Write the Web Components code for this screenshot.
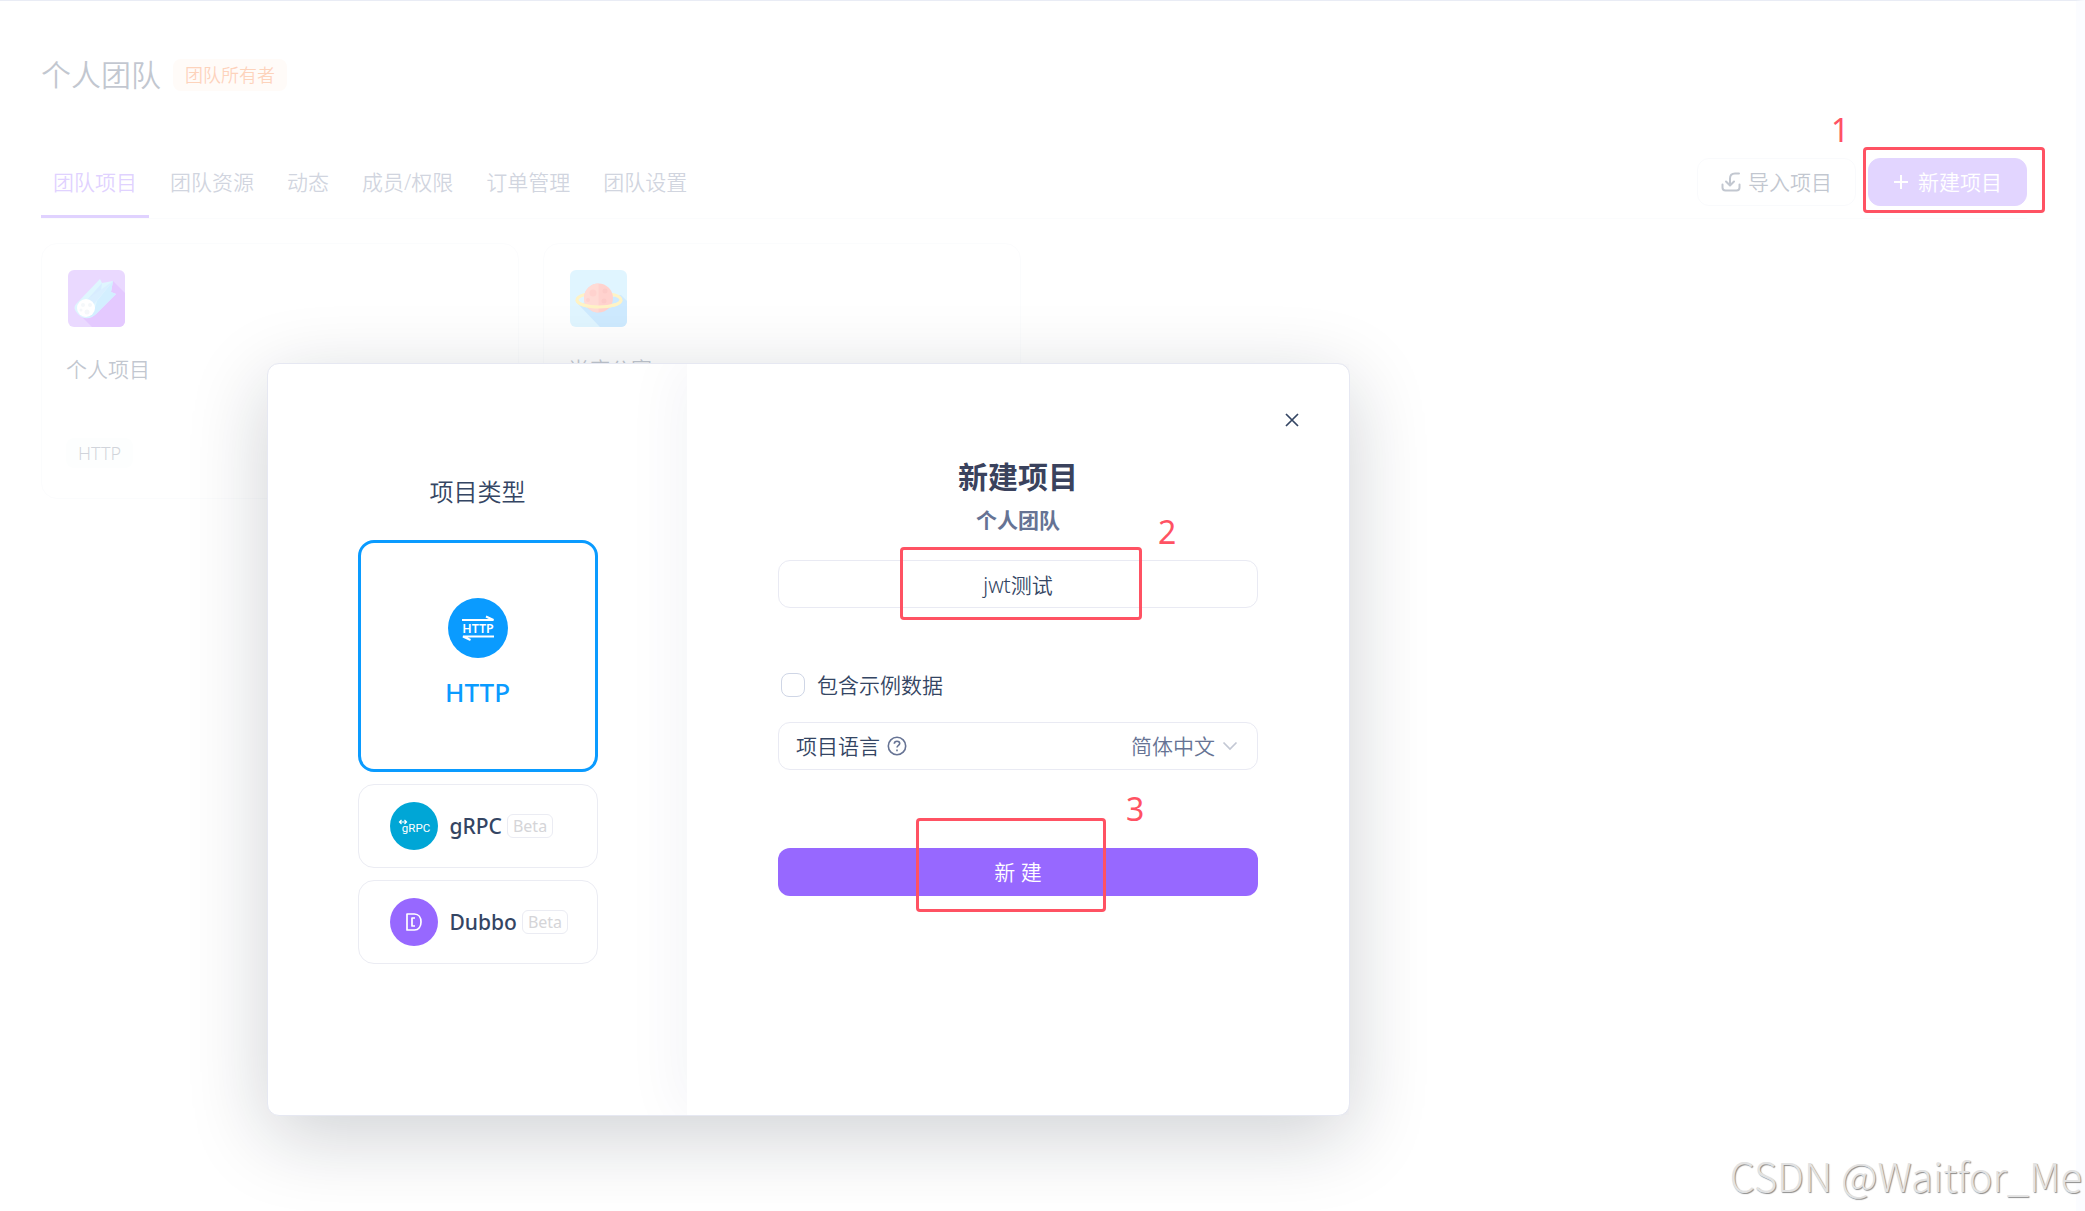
<!DOCTYPE html>
<html lang="zh-CN">
<head>
<meta charset="utf-8">
<title>个人团队</title>
<style>
  body {
    margin: 0;
    background: #ffffff;
    color: #344563;
    font-family: "Noto Sans", "Noto Sans CJK SC", sans-serif;
    font-size: 21px;
    line-height: 32px;
    font-weight: 350;
  }
</style>
</head>
<body>

<team-page>
  <team-header slot="header" name="个人团队" role-text="团队所有者"></team-header>
  <team-tabs slot="tabs">
    <tool-button slot="actions" label="导入项目" icon="import"></tool-button>
    <step-mark slot="actions" step="1" style="--top:-11px; --right:-18px; --bottom:-7px; --left:-5px; --num-x:-37px; --num-y:-44px">
      <tool-button label="新建项目" icon="plus" primary></tool-button>
    </step-mark>
  </team-tabs>
  <project-card name="个人项目" kind="HTTP" art="comet"></project-card>
  <project-card name="尚庭公寓" kind="HTTP" art="planet"></project-card>
</team-page>

<project-dialog>
  <type-card slot="types" label="HTTP" icon="http" selected></type-card>
  <type-card slot="types" label="gRPC" icon="grpc" beta></type-card>
  <type-card slot="types" label="Dubbo" icon="dubbo" beta></type-card>
  <project-form slot="form"></project-form>
</project-dialog>

<water-mark>CSDN @Waitfor_Me</water-mark>

<script>
// every element clones its template into an open shadow root
class BaseElement extends HTMLElement {
    constructor(){
        super();
        this.attachShadow({mode:"open"});
    }
    render(html){
        var template = document.createElement("template");
        template.innerHTML = "<style>*{box-sizing:border-box} svg{flex:none}</style>" + html;
        this.shadowRoot.appendChild(template.content.cloneNode(true));
    }
}

var icons = {
    import: `<svg width="20" height="20" viewBox="0 0 20 20" fill="none" stroke="currentColor" stroke-width="2" stroke-linecap="round" stroke-linejoin="round"><path d="M18 1.500h-4c-3 0-5 2-5 5V13M5 9.500l4 4 4-4M1.500 12.500v3a3 3 0 0 0 3 3h11a3 3 0 0 0 3-3v-3"/></svg>`,
    plus: `<svg width="16" height="16" viewBox="0 0 16 16" fill="none" stroke="currentColor" stroke-width="2"><path d="M8 1v14M1 8h14"/></svg>`,
    http: `<svg width="60" height="60" viewBox="0 0 60 60"><circle cx="30" cy="30" r="30" fill="#0a9bff"/><path d="M14 22h31.500l-7.500-3.500M46 38.500H15l7.500 3.500" fill="none" stroke="#fff" stroke-width="2"/><text x="30" y="34.500" text-anchor="middle" fill="#fff" font-size="12.500" font-weight="600" font-family="Noto Sans, sans-serif">HTTP</text></svg>`,
    grpc: `<svg width="48" height="48" viewBox="0 0 48 48"><circle cx="24" cy="24" r="24" fill="#00a6d6"/><path d="M9.500 20h7M11.500 18l-2 2 2 2M14.500 18l2 2-2 2" fill="none" stroke="#fff" stroke-width="1.200"/><text x="26" y="30" text-anchor="middle" fill="#fff" font-size="11.500" font-weight="400" font-family="Roboto, sans-serif">gRPC</text></svg>`,
    dubbo: `<svg width="48" height="48" viewBox="0 0 48 48"><circle cx="24" cy="24" r="24" fill="#9768ff"/><path d="M17 16h7.500c4 0 6.500 3.500 6.500 8s-2.500 8-6.500 8H17zM25 20h-3v8h3" fill="none" stroke="#fff" stroke-width="1.700" stroke-linejoin="round"/></svg>`,
    comet: `<svg width="57" height="57" viewBox="0 0 57 57"><defs><clipPath id="c"><rect width="57" height="57" rx="6"/></clipPath></defs><g clip-path="url(#c)"><rect width="57" height="57" fill="#b980ff"/><path d="M45 11l12 12v34H24L12 45z" fill="#a34bff"/><path d="M9 33L32 9l2 4 11-2-2 11 5 2-20 20c-5 5-12 6-17 1s-6-8-2-12z" fill="#93e0fb"/><path d="M45 11l-2 11 5 2-20 20c-3 3-7 4-11 3 8-3 10-8 12-16z" fill="#6cc8ff"/><path d="M34 13l-1 8-14 9z" fill="#7cc0ff"/><path d="M45 11L26 34l-6-5z" fill="#84c8ff"/><circle cx="18" cy="38" r="9" fill="#fff"/><circle cx="15" cy="35" r="2" fill="#dde6ee"/><circle cx="19" cy="42" r="2.500" fill="#dde6ee"/><circle cx="22" cy="35" r="2" fill="#dde6ee"/><circle cx="13" cy="40" r="1.500" fill="#dde6ee"/></g></svg>`,
    planet: `<svg width="57" height="57" viewBox="0 0 57 57"><defs><clipPath id="p"><rect width="57" height="57" rx="6"/></clipPath></defs><g clip-path="url(#p)"><rect width="57" height="57" fill="#98dcff"/><path d="M51 25l6 6v26H30L8 34z" fill="#5ab8ff"/><ellipse cx="29" cy="30" rx="22" ry="7" fill="none" stroke="#ffd63d" stroke-width="3"/><circle cx="28.500" cy="28" r="14.500" fill="#ff6a5c"/><path d="M28.500 13.500a14.500 14.500 0 0 0 0 29z" fill="#ff8674"/><circle cx="23" cy="23" r="3.500" fill="#ff6a5c"/><circle cx="35" cy="21" r="2.500" fill="#f65248"/><circle cx="34" cy="31" r="2.500" fill="#f65248"/><circle cx="18" cy="30" r="2" fill="#ff6a5c"/><path d="M7 30c0 4 10 7 22 7s22-3 22-7" fill="none" stroke="#ffd63d" stroke-width="3"/></g></svg>`,
    help: `<svg width="20" height="20" viewBox="0 0 20 20" fill="none" stroke="currentColor" stroke-width="1.600"><circle cx="10" cy="10" r="8.700"/><path d="M7.300 7.800c.1-1.600 1.200-2.500 2.700-2.500s2.700 1 2.700 2.300c0 1.700-2.700 1.900-2.700 4"/><path d="M10 13.400v1.800"/></svg>`,
    close: `<svg width="16" height="16" viewBox="0 0 16 16" fill="none" stroke="currentColor" stroke-width="1.700"><path d="M2 2l12 12M14 2L2 14"/></svg>`,
    down: `<svg width="16" height="16" viewBox="0 0 16 16" fill="none" stroke="#c3c8d4" stroke-width="1.700"><path d="M1.500 4.500L8 11l6.500-6.500"/></svg>`
};

class TeamPage extends BaseElement {
    connectedCallback(){
        this.render(`
<style>
    :host{
        display: block;
        position: relative;
        min-height: 100vh;
        box-sizing: border-box;
        padding: 0 49px 0 41px;
        border-top: 1px solid #b4bfdc;
        border-right: 9px solid #f1f5ff;
    }
    /* white veil that dims the page behind the dialog */
    :host::after{
        content: "";
        position: absolute;
        inset: -1px -9px 0 0;
        background: rgba(255,255,255,.7);
        pointer-events: none;
        z-index: 1;
    }
    main{
        display: grid;
        grid-template-columns: repeat(auto-fill, 478px);
        gap: 24px;
        padding-top: 24px;
    }
</style>
<slot name="header"></slot>
<slot name="tabs"></slot>
<main><slot></slot></main>`);
    }
}

class TeamHeader extends BaseElement {
    connectedCallback(){
        this.render(`
<style>
    :host{
        display: flex;
        align-items: center;
        gap: 12px;
        height: 147px;
    }
    h1{
        margin: 0;
        font-size: 30px;
        line-height: 40px;
        font-weight: inherit;
    }
    span{
        padding: 0 12px;
        font-size: 18px;
        line-height: 32px;
        border-radius: 8px;
        color: #f76b1c;
        background: #fff0e6;
    }
</style>
<h1>${this.getAttribute("name")}</h1>
<span>${this.getAttribute("role-text")}</span>`);
    }
}

class TeamTabs extends BaseElement {
    connectedCallback(){
        var names = ["团队项目", "团队资源", "动态", "成员/权限", "订单管理", "团队设置"];
        this.render(`
<style>
    :host{
        display: flex;
        justify-content: space-between;
        border-bottom: 1px solid #f2f4f8;
    }
    nav{
        display: flex;
        gap: 9px;
    }
    a{
        padding: 18px 12px 17px;
        color: #667394;
        text-decoration: none;
        border-bottom: 3px solid transparent;
    }
    a.active{
        color: #9768ff;
        border-color: #9768ff;
    }
    div{
        display: flex;
        gap: 12px;
        align-items: start;
        padding-top: 10px;
    }
</style>
<nav>${names.map((n, i) => `<a href="#"${i == 0 ? ' class="active"' : ""}>${n}</a>`).join("")}</nav>
<div><slot name="actions"></slot></div>`);
    }
}

class ToolButton extends BaseElement {
    connectedCallback(){
        this.render(`
<style>
    :host{
        display: block;
    }
    button{
        display: flex;
        align-items: center;
        justify-content: center;
        gap: 7px;
        width: 159px;
        height: 48px;
        padding: 0;
        font: inherit;
        color: #344563;
        background: #fff;
        border: 1px solid #eceef5;
        border-radius: 12px;
    }
    :host([primary]) button{
        gap: 9px;
        color: #fff;
        background: #9f74ff;
        border-color: #9f74ff;
    }
</style>
<button type="button">${icons[this.getAttribute("icon")]}${this.getAttribute("label")}</button>`);
    }
}

// numbered red frame drawn over the control it wraps
class StepMark extends BaseElement {
    connectedCallback(){
        this.render(`
<style>
    :host{
        display: block;
        position: relative;
    }
    i, b{
        position: absolute;
        z-index: 2;
        pointer-events: none;
    }
    i{
        top: var(--top);
        right: var(--right);
        bottom: var(--bottom);
        left: var(--left);
        border: 3px solid #ff5263;
        border-radius: 4px;
    }
    b{
        left: var(--num-x);
        top: var(--num-y);
        font-size: 32px;
        line-height: 32px;
        font-weight: 400;
        color: #ff5263;
    }
</style>
<slot></slot><i></i><b>${this.getAttribute("step")}</b>`);
    }
}

class ProjectCard extends BaseElement {
    connectedCallback(){
        this.render(`
<style>
    :host{
        display: flex;
        flex-direction: column;
        align-items: start;
        height: 256px;
        box-sizing: border-box;
        padding: 26px 24px;
        border: 1px solid #f2f4f8;
        border-radius: 16px;
    }
    svg{
        display: block;
        margin-left: 2px;
    }
    h2{
        margin: 26px 0 0;
        font-size: 21px;
        line-height: 32px;
        font-weight: inherit;
    }
    span{
        margin-top: 53px;
        padding: 0 12px;
        font-size: 18px;
        line-height: 30px;
        color: #667085;
        background: #f7fcfa;
        border-radius: 8px;
    }
</style>
${icons[this.getAttribute("art")]}
<h2>${this.getAttribute("name")}</h2>
<span>${this.getAttribute("kind")}</span>`);
    }
}

class ProjectDialog extends BaseElement {
    connectedCallback(){
        this.render(`
<style>
    :host{
        display: grid;
        grid-template-columns: 419fr 662fr;
        position: absolute;
        z-index: 3;
        top: 363px;
        left: 267px;
        width: 1083px;
        max-width: calc(100vw - 300px);
        min-height: 753px;
        box-sizing: border-box;
        background: #fff;
        border: 1px solid #e6e8f2;
        border-radius: 12px;
        box-shadow: 0 20px 80px rgba(16,24,40,.2);
    }
    aside{
        display: flex;
        flex-direction: column;
        align-items: center;
        gap: 12px;
        padding-top: 112px;
    }
    h3{
        margin: 0 0 20px;
        font-size: 24px;
        line-height: 32px;
        font-weight: inherit;
    }
    section{
        border-radius: 0 12px 12px 0;
        box-shadow: -8px 0 60px rgba(20,30,90,.05);
        clip-path: inset(0 0 0 -80px);
    }
</style>
<aside><h3>项目类型</h3><slot name="types"></slot></aside>
<section><slot name="form"></slot></section>`);
    }
}

class TypeCard extends BaseElement {
    connectedCallback(){
        this.render(`
<style>
    :host{
        display: block;
    }
    button{
        display: flex;
        align-items: center;
        gap: 12px;
        width: 240px;
        height: 84px;
        padding: 0 16px 0 31px;
        font: inherit;
        font-weight: 500;
        color: #344563;
        background: #fff;
        border: 1px solid #ebecf3;
        border-radius: 16px;
    }
    :host([selected]) button{
        flex-direction: column;
        justify-content: center;
        gap: 16px;
        height: 232px;
        padding: 0 0 4px;
        font-size: 26px;
        line-height: 36px;
        color: #0a9bff;
        border: 3px solid #0a9bff;
    }
    div{
        display: flex;
        align-items: center;
        gap: 5px;
    }
    small{
        padding: 0 5px;
        font-size: 16px;
        line-height: 22px;
        font-weight: 400;
        color: #d5d5d8;
        border: 1px solid #ebecf3;
        border-radius: 6px;
    }
</style>
<button type="button" aria-pressed="${this.hasAttribute("selected")}">
    ${icons[this.getAttribute("icon")]}
    <div>${this.getAttribute("label")}${this.hasAttribute("beta") ? "<small>Beta</small>" : ""}</div>
</button>`);
    }
}

class ProjectForm extends BaseElement {
    connectedCallback(){
        this.render(`
<style>
    :host{
        display: block;
        position: relative;
        padding: 93px 91px 0;
    }
    .close{
        position: absolute;
        top: 48px;
        right: 49px;
        display: flex;
        padding: 0;
        color: #344563;
        background: none;
        border: 0;
    }
    h2, p{
        margin: 0;
        text-align: center;
        font-weight: 700;
    }
    h2{
        font-size: 30px;
        line-height: 40px;
        color: #3a425d;
    }
    p{
        margin-top: 7px;
        color: #667394;
    }
    .name{
        margin-top: 24px;
    }
    input, select, button{
        font: inherit;
    }
    .name input{
        display: block;
        width: 100%;
        height: 48px;
        color: #344563;
        text-align: center;
        border: 1px solid #e9eaf3;
        border-radius: 12px;
        background: #fff;
    }
    .sample{
        display: flex;
        align-items: center;
        gap: 12px;
        margin: 61px 0 0 3px;
    }
    .sample input{
        appearance: none;
        width: 24px;
        height: 24px;
        margin: 0;
        border: 1px solid #cfd6e6;
        border-radius: 8px;
    }
    .lang{
        display: flex;
        align-items: center;
        gap: 7px;
        height: 48px;
        margin-top: 21px;
        padding: 0 19px 0 17px;
        border: 1px solid #e9eaf3;
        border-radius: 12px;
    }
    .lang svg{
        color: #667394;
    }
    select{
        appearance: none;
        margin-left: auto;
        padding: 0;
        color: #667394;
        background: none;
        border: 0;
    }
    .submit{
        margin-top: 78px;
    }
    .submit button{
        display: block;
        width: 100%;
        height: 48px;
        color: #fff;
        background: #9768ff;
        border: 0;
        border-radius: 12px;
    }
</style>
<button class="close" type="button" aria-label="关闭">${icons.close}</button>
<h2>新建项目</h2>
<p>个人团队</p>
<step-mark class="name" step="2" style="--top:-13px; --right:116px; --bottom:-12px; --left:122px; --num-x:380px; --num-y:-44px">
    <input type="text" value="jwt测试" aria-label="项目名称">
</step-mark>
<label class="sample"><input type="checkbox">包含示例数据</label>
<div class="lang">
    <label for="lang">项目语言</label>${icons.help}
    <select id="lang"><option>简体中文</option></select>${icons.down}
</div>
<step-mark class="submit" step="3" style="--top:-30px; --right:152px; --bottom:-16px; --left:138px; --num-x:348px; --num-y:-55px">
    <button type="button">新 建</button>
</step-mark>`);
    }
}

class WaterMark extends BaseElement {
    connectedCallback(){
        this.render(`
<style>
    :host{
        position: absolute;
        z-index: 4;
        right: 3px;
        bottom: 12px;
        font-family: "Noto Sans CJK SC", sans-serif;
        font-size: 40px;
        line-height: 48px;
        font-weight: 300;
        white-space: nowrap;
        color: #e2e2e2;
        text-shadow: 1px 1px 1px #8c8c8c;
    }
</style>
<slot></slot>`);
    }
}

customElements.define("step-mark", StepMark)
customElements.define("tool-button", ToolButton)
customElements.define("team-header", TeamHeader)
customElements.define("team-tabs", TeamTabs)
customElements.define("project-card", ProjectCard)
customElements.define("team-page", TeamPage)
customElements.define("type-card", TypeCard)
customElements.define("project-form", ProjectForm)
customElements.define("project-dialog", ProjectDialog)
customElements.define("water-mark", WaterMark)
</script>
</body>
</html>
